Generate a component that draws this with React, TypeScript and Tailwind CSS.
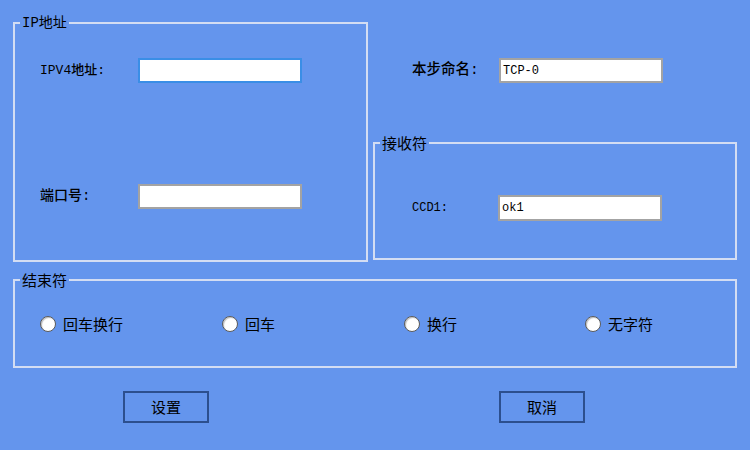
import React from "react";

const SONG = { fontFamily: '"Liberation Mono", "Noto Sans CJK SC", monospace' };
const HEI = { fontFamily: '"Noto Sans CJK SC", "Noto Sans", sans-serif' };

function Legend({ children, mono }: { children: React.ReactNode; mono?: boolean }) {
  return (
    <legend
      className={
        "ml-[5px] px-[2px] leading-[20px] text-black " +
        (mono ? "text-[14px]" : "text-[15px]")
      }
      style={mono ? SONG : HEI}
    >
      {children}
    </legend>
  );
}

function Field({
  value,
  focused,
  className,
}: {
  value?: string;
  focused?: boolean;
  className?: string;
}) {
  return (
    <div
      className={
        "h-[25px] w-[164px] bg-white flex items-center px-[2px] text-[12px] font-medium text-black " +
        (focused ? "border-2 border-[#3a8ee6] " : "border-2 border-[#a3a3a3] ") +
        (className ?? "")
      }
      style={SONG}
    >
      {value}
    </div>
  );
}

function Radio({ label }: { label: string }) {
  return (
    <div className="flex items-center gap-[7px] h-[20px]">
      <div className="w-[16px] h-[16px] rounded-full bg-white border border-[#5a5a5a] shadow-[inset_1px_1px_1px_rgba(0,0,0,0.25)]" />
      <span className="text-[15px] leading-[20px] text-black" style={HEI}>
        {label}
      </span>
    </div>
  );
}

function Button({ label }: { label: string }) {
  return (
    <div
      className="w-[86px] h-[32px] border-2 border-[#2c4f8e] flex items-center justify-center text-[15px] text-black"
      style={HEI}
    >
      {label}
    </div>
  );
}

export default function App() {
  return (
    <div className="w-[750px] h-[450px] bg-[#6495ED] px-[13px] pt-[13px] overflow-hidden">
      <div className="flex gap-[5px]">
        {/* IP group */}
        <fieldset className="m-0 p-0 w-[355px] h-[249px] border-2 border-[#d3ddf3] min-w-0">
          <Legend mono>IP地址</Legend>
          <div className="pl-[25px] pt-[25px] flex flex-col gap-[101px]">
            <div className="flex items-center">
              <span className="w-[98px] text-[13px] font-medium text-black" style={SONG}>
                IPV4地址:
              </span>
              <Field focused />
            </div>
            <div className="flex items-center">
              <span className="w-[98px] text-[14px] font-medium text-black" style={SONG}>
                端口号:
              </span>
              <Field />
            </div>
          </div>
        </fieldset>

        {/* Right column */}
        <div className="w-[364px] flex flex-col">
          <div className="h-[120px] pt-[45px] pl-[39px] flex items-start">
            <div className="flex items-center">
              <span className="w-[87px] text-[14.5px] font-medium text-black" style={SONG}>
                本步命名:
              </span>
              <Field value="TCP-0" />
            </div>
          </div>
          <fieldset className="m-0 p-0 h-[127px] border-2 border-[#d3ddf3] min-w-0">
            <Legend>接收符</Legend>
            <div className="pl-[37px] pt-[42px] flex items-center">
              <span className="w-[86px] text-[12px] font-medium text-black" style={SONG}>
                CCD1:
              </span>
              <Field value="ok1" className="h-[26px]" />
            </div>
          </fieldset>
        </div>
      </div>

      {/* End group */}
      <fieldset className="mt-[8px] mx-0 mb-0 p-0 w-[724px] h-[98px] border-2 border-[#d3ddf3] min-w-0">
        <Legend>结束符</Legend>
        <div className="pl-[25px] pt-[24px] grid grid-cols-[182px_182px_181px_1fr]">
          <Radio label="回车换行" />
          <Radio label="回车" />
          <Radio label="换行" />
          <Radio label="无字符" />
        </div>
      </fieldset>

      <div className="flex pt-[23px] pl-[110px] gap-[290px]">
        <Button label="设置" />
        <Button label="取消" />
      </div>
    </div>
  );
}
